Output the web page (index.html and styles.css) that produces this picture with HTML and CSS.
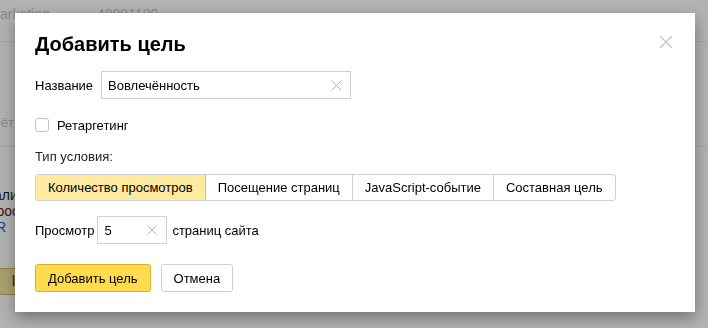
FILE: index.html
```html
<!DOCTYPE html>
<html lang="ru">
<head>
<meta charset="utf-8">
<title>Добавить цель</title>
<link rel="stylesheet" href="styles.css">
</head>
<body>
<div class="page">
  <div class="bg-row bg-head">
    <span class="bg-muted bg-c1">arketing</span>
    <span class="bg-muted bg-c2">48801189</span>
  </div>
  <div class="bg-row bg-mid">
    <span class="bg-muted">Отчёт</span>
  </div>
  <div class="bg-body">
    <div class="bg-line">Удалить</div>
    <div class="bg-line bg-red">Опрос</div>
    <div class="bg-line bg-blue">eUR</div>
    <div class="bg-btn">ll</div>
  </div>
</div>
<div class="overlay"></div>
<div class="dialog">
  <svg class="dialog-close" width="14" height="14" viewBox="0 0 14 14"><path d="M1 1L13 13M13 1L1 13" stroke="#c8c8c8" stroke-width="1.5" fill="none"/></svg>
  <h1 class="dialog-title">Добавить цель</h1>
  <div class="row row-name">
    <span class="label">Название</span>
    <div class="input input-name">
      <span class="input-text">Вовлечённость</span>
      <svg class="clear" width="11" height="11" viewBox="0 0 11 11"><path d="M0.5 0.5L10.5 10.5M10.5 0.5L0.5 10.5" stroke="#b5b5b5" stroke-width="1" fill="none"/></svg>
    </div>
  </div>
  <label class="row row-check">
    <span class="checkbox"></span>
    <span>Ретаргетинг</span>
  </label>
  <div class="row-type">Тип условия:</div>
  <div class="tabs">
    <div class="tab tab-active">Количество просмотров</div>
    <div class="tab">Посещение страниц</div>
    <div class="tab">JavaScript-событие</div>
    <div class="tab">Составная цель</div>
  </div>
  <div class="row row-views">
    <span class="label">Просмотр</span>
    <div class="input input-small">
      <span class="input-text">5</span>
      <svg class="clear" width="10" height="10" viewBox="0 0 10 10"><path d="M0.5 0.5L9.5 9.5M9.5 0.5L0.5 9.5" stroke="#b5b5b5" stroke-width="1" fill="none"/></svg>
    </div>
    <span class="label-after">страниц сайта</span>
  </div>
  <div class="row row-buttons">
    <button class="btn btn-primary">Добавить цель</button>
    <button class="btn">Отмена</button>
  </div>
</div>
</body>
</html>
```
FILE: styles.css
```css
html, body {
  margin: 0;
  padding: 0;
  height: 100%;
}
body {
  font-family: "Liberation Sans", Arial, sans-serif;
  font-size: 13px;
  color: #000;
  background: #fff;
  overflow: hidden;
}
.page {
  height: 100%;
}
.bg-row {
  border-bottom: 1px solid #eeeeee;
  display: flex;
  align-items: center;
}
.bg-head {
  height: 42px;
  align-items: flex-start;
  padding-top: 6px;
  box-sizing: border-box;
  font-size: 14px;
}
.bg-muted {
  color: #c4c4c4;
}
.bg-c1 {
  width: 97px;
}
.bg-mid {
  height: 105px;
  padding-top: 56px;
  box-sizing: border-box;
  margin-left: -22px;
}
.bg-body {
  padding-top: 40px;
  margin-left: -22px;
  font-size: 14px;
  line-height: 16px;
}
.bg-line {
  color: #222;
}
.bg-red {
  color: #5a1a1a;
}
.bg-blue {
  color: #1f5fbf;
}
.bg-btn {
  margin-top: 33px;
  margin-left: 21px;
  width: 20px;
  height: 25px;
  border: 1px solid #c9b25b;
  border-radius: 3px;
  background: #f7e6a0;
  color: #7a1010;
  line-height: 25px;
  padding-left: 12px;
}
.overlay {
  position: fixed;
  inset: 0;
  background: rgba(0, 0, 0, 0.3);
}
.dialog {
  position: absolute;
  left: 15px;
  top: 13px;
  width: 680px;
  box-sizing: border-box;
  padding: 20px;
  background: #fff;
  box-shadow: 0 6px 14px rgba(0, 0, 0, 0.35);
}
.dialog-close {
  position: absolute;
  right: 22px;
  top: 22px;
  display: block;
}
.dialog-title {
  margin: 0;
  font-size: 20px;
  font-weight: bold;
  line-height: 23px;
}
.row {
  display: flex;
  align-items: center;
}
.label {
  margin-right: 8px;
}
.row-name {
  margin-top: 15px;
}
.input {
  height: 28px;
  box-sizing: border-box;
  border: 1px solid #d0d0d0;
  display: flex;
  align-items: center;
  padding-left: 6px;
}
.input-text {
  flex: 1;
}
.input-name {
  width: 250px;
  padding-right: 8px;
}
.input-small {
  width: 70px;
  margin-left: -5px;
  padding-right: 9px;
}
.clear {
  display: block;
}
.label-after {
  margin-left: 5px;
}
.row-check {
  margin-top: 19px;
  height: 14px;
  gap: 8px;
}
.checkbox {
  width: 14px;
  height: 14px;
  box-sizing: border-box;
  border: 1px solid #c4c4c4;
  border-radius: 3px;
  background: #fff;
}
.row-type {
  margin-top: 17px;
  line-height: 16px;
  color: #222;
}
.tabs {
  margin-top: 9px;
  display: flex;
  width: max-content;
  border: 1px solid #d0d0d0;
  border-radius: 3px;
  overflow: hidden;
}
.tab {
  height: 25px;
  line-height: 25px;
  padding: 0 12px;
  border-left: 1px solid #d0d0d0;
  white-space: nowrap;
}
.tab:first-child {
  border-left: none;
}
.tab-active {
  background: #ffeba0;
  border-right: 1px solid #d9c169;
  margin-right: -1px;
  position: relative;
}
.row-views {
  margin-top: 15px;
}
.row-buttons {
  margin-top: 20px;
  gap: 10px;
}
.btn {
  font-family: inherit;
  font-size: 13px;
  color: #000;
  height: 28px;
  padding: 0 12px;
  border: 1px solid #cfcfcf;
  border-radius: 3px;
  background: #fff;
  margin: 0;
}
.btn-primary {
  background: #ffdb4d;
  border-color: #d9b02e;
}
```
